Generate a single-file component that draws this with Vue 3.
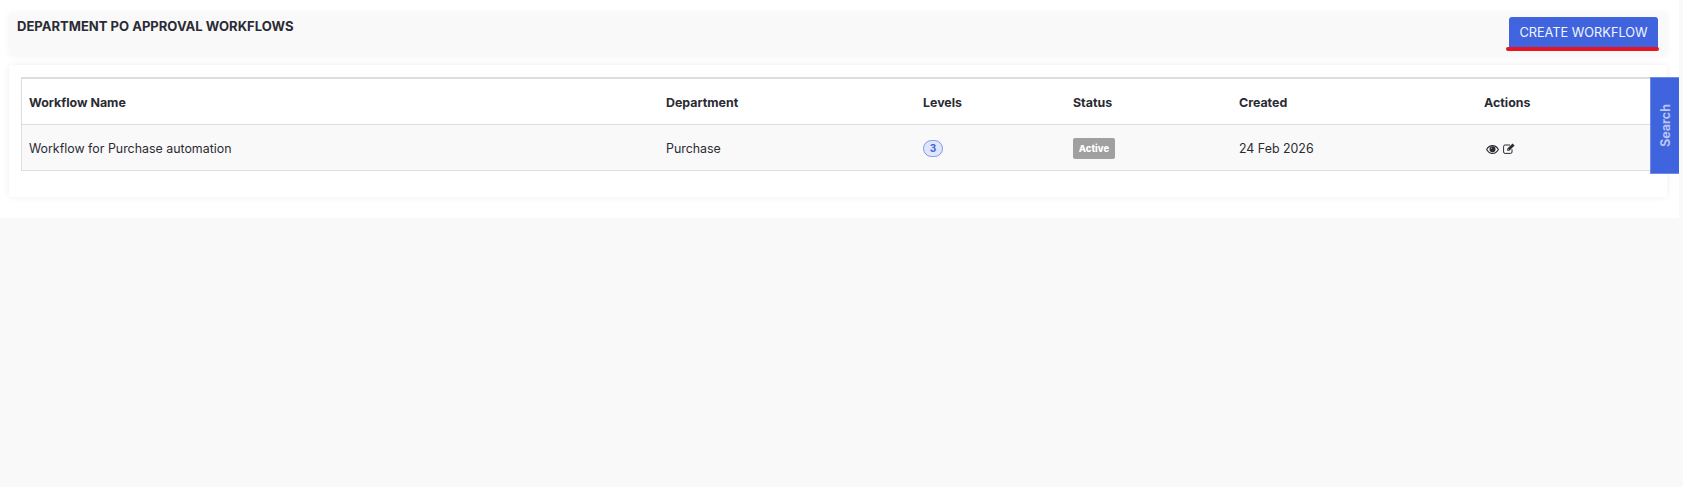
<script setup>
const columns = [
  { label: 'Workflow Name', width: '637px' },
  { label: 'Department', width: '257px' },
  { label: 'Levels', width: '150px' },
  { label: 'Status', width: '166px' },
  { label: 'Created', width: '245px' },
  { label: 'Actions', width: 'auto' },
]
</script>

<template>
  <div class="page">
    <div class="top">
      <header class="head-card">
        <h1 class="title">DEPARTMENT PO APPROVAL WORKFLOWS</h1>
        <div class="btn-wrap">
          <button class="create" type="button">CREATE WORKFLOW</button>
        </div>
      </header>
      <section class="table-card">
        <table class="grid">
          <colgroup>
            <col v-for="c in columns" :key="c.label" :style="{ width: c.width }" />
          </colgroup>
          <thead>
            <tr>
              <th v-for="c in columns" :key="c.label">{{ c.label }}</th>
            </tr>
          </thead>
          <tbody>
            <tr>
              <td>Workflow for Purchase automation</td>
              <td>Purchase</td>
              <td><span class="level">3</span></td>
              <td><span class="status">Active</span></td>
              <td>24 Feb 2026</td>
              <td>
                <span class="actions">
                  <svg class="eye" viewBox="0 0 13 9" width="13" height="9" aria-hidden="true">
                    <path d="M.6 4.500C2 2.100 4 .6 6.500.6s4.500 1.500 5.900 3.900C11 6.900 9 8.400 6.500 8.400S2 6.900.6 4.500z" fill="#fff" stroke="#2b2b33" stroke-width="1.100"/>
                    <circle cx="6.500" cy="4.300" r="3" fill="#2b2b33"/>
                    <circle cx="5.400" cy="3.300" r=".8" fill="#8a8a90"/>
                  </svg>
                  <svg class="edit" viewBox="0 0 12 11" width="12" height="11" aria-hidden="true">
                    <path d="M9 6.300V9a1.400 1.400 0 0 1-1.400 1.400H2A1.400 1.400 0 0 1 .6 9V3.400A1.400 1.400 0 0 1 2 2h5" fill="none" stroke="#2b2b33" stroke-width="1"/>
                    <path d="M4.200 5.700 9.500.4 11.600 2.500 6.300 7.800H4.200z" fill="#2b2b33"/>
                    <path d="M4.900 5.900 5.900 6.900" stroke="#fff" stroke-width=".5"/>
                  </svg>
                </span>
              </td>
            </tr>
          </tbody>
        </table>
        <aside class="search-tab"><span>Search</span></aside>
      </section>
    </div>
  </div>
</template>

<style>
html, body { margin: 0; background: #f9f9f9; }
</style>

<style scoped>
.page {
  min-height: 487px;
  background: #f9f9f9;
  font-family: Inter, "Open Sans", sans-serif;
  color: #2b2b33;
}
.top {
  box-sizing: border-box;
  height: 218px;
  margin-right: 4px;
  background: #fff;
  padding: 13px 12px 0 9px;
}
.head-card {
  box-sizing: border-box;
  height: 43px;
  background: #f9f9fa;
  border-radius: 3px;
  box-shadow: 0 0 6px rgba(0, 0, 0, .05);
  display: flex;
  justify-content: space-between;
  align-items: flex-start;
  padding: 0 9px 0 8px;
}
.title {
  margin: 3px 0 0;
  font-size: 13.050px;
  line-height: 20px;
  font-weight: 700;
  color: #2b2b33;
}
.btn-wrap {
  padding-top: 4px;
}
.create {
  position: relative;
  display: block;
  box-sizing: border-box;
  width: 149px;
  height: 31px;
  border: 0;
  border-radius: 3px 3px 0 0;
  background: #4064dd;
  color: #f2f5ff;
  font: 400 12.750px/1 Inter, sans-serif;
  padding: 2px 0 0;
}
.create::after {
  content: "";
  position: absolute;
  left: -3px;
  right: -1px;
  bottom: -3px;
  height: 4px;
  border-radius: 2px;
  background: #e8141f;
}
.table-card {
  position: relative;
  box-sizing: border-box;
  margin-top: 9px;
  height: 132px;
  background: #fff;
  border-radius: 3px;
  box-shadow: 0 0 7px rgba(0, 0, 0, .07);
  padding: 12px 17px 0 12px;
}
.grid {
  width: 100%;
  table-layout: fixed;
  border-collapse: separate;
  border-spacing: 0;
  border-top: 2px solid #ddd;
  border-left: 1px solid #ddd;
  font-size: 12.400px;
}
th, td {
  box-sizing: border-box;
  text-align: left;
  padding: 2px 7px 0;
  border-bottom: 1px solid #ddd;
}
th {
  height: 46px;
  font-weight: 700;
  background: #fff;
}
td {
  height: 46px;
  background: #f9f9f9;
  font-weight: 400;
}
.level {
  display: inline-block;
  box-sizing: border-box;
  width: 20px;
  height: 17px;
  border: 1px solid #7e97ee;
  border-radius: 9px;
  background: #dfe6fb;
  color: #3f5fd9;
  font-size: 10px;
  font-weight: 700;
  line-height: 15px;
  text-align: center;
  vertical-align: middle;
}
.status {
  display: inline-block;
  box-sizing: border-box;
  width: 42px;
  height: 21px;
  border-radius: 2px;
  background: #a0a0a0;
  color: #fff;
  font-size: 9.500px;
  font-weight: 800;
  line-height: 21px;
  text-align: center;
  vertical-align: middle;
}
.actions {
  display: inline-flex;
  align-items: center;
  gap: 4px;
  padding-left: 2px;
  vertical-align: middle;
}
.edit {
  margin-bottom: 2px;
}
.search-tab {
  position: absolute;
  box-sizing: border-box;
  left: 1641px;
  top: 12px;
  width: 29px;
  height: 97px;
  background: #4064dd;
  border: 1px solid #6f8be6;
  border-right: 0;
  display: flex;
  align-items: center;
  justify-content: center;
}
.search-tab span {
  writing-mode: vertical-rl;
  transform: rotate(180deg);
  color: #b9c6f3;
  font-size: 12.500px;
  font-weight: 700;
}
</style>
